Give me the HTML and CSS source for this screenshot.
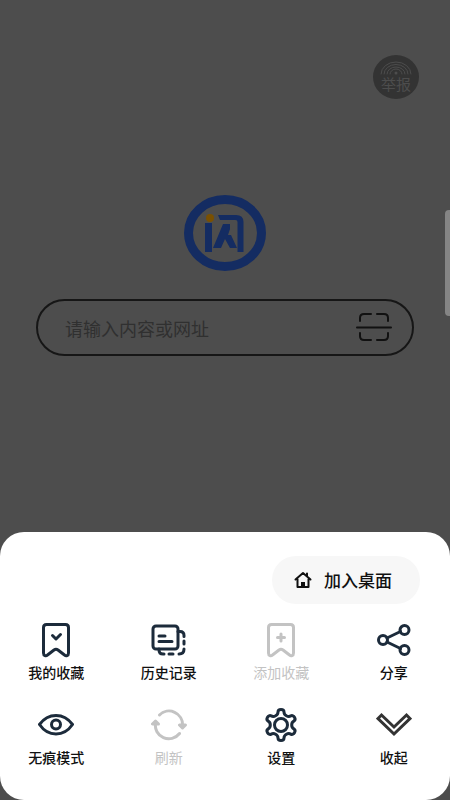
FILE: index.html
```html
<!DOCTYPE html>
<html lang="zh-CN">
<head>
<meta charset="utf-8">
<meta name="viewport" content="width=device-width, initial-scale=1">
<title>闪</title>
<link rel="stylesheet" href="styles.css">
</head>
<body>
<main class="home">
  <button class="report" type="button">
    <svg class="report-waves" viewBox="0 0 32 14" aria-hidden="true">
      <path d="M1 13a15 12 0 0 1 30 0M4 13a12 9.500 0 0 1 24 0M7 13a9 7 0 0 1 18 0M10 13a6 5 0 0 1 12 0"/>
      <circle cx="16" cy="12" r="1.500"/>
    </svg>
    <span>举报</span>
  </button>
  <svg class="logo" viewBox="0 0 82 76" aria-hidden="true">
    <ellipse class="logo-ring" cx="41" cy="38" rx="36.500" ry="33.500"/>
    <path class="logo-fill" d="M21 28h7v29h-7zM34 20h18q7.500 0 7.500 7v30h-6V27q0-2-2-2H36zM39 29h7v5l-2 6h3l6 13h-7l-5-9-4 9h-8z"/>
    <circle class="logo-dot" cx="26" cy="23" r="4"/>
  </svg>
  <form class="search">
    <input type="text" placeholder="请输入内容或网址" aria-label="请输入内容或网址">
    <button class="scan" type="button" aria-label="扫一扫">
      <svg viewBox="0 0 36 30" aria-hidden="true">
        <path d="M4 8V5q0-4 4-4h7M21 1h7q4 0 4 4v3M1 14.500h34M4 20v3q0 4 4 4h7M21 27h7q4 0 4-4v-3"/>
      </svg>
    </button>
  </form>
</main>
<div class="side-handle"></div>
<section class="sheet">
  <button class="add-desktop" type="button">
    <svg viewBox="0 0 18 18" aria-hidden="true">
      <path d="M1.500 8.500 9 2l7.500 6.500M3.500 8v8h11V8M13 2.500V5"/>
      <path class="door" d="M7 16v-5h4v5z"/>
    </svg>
    <span>加入桌面</span>
  </button>
  <nav class="menu">
    <button class="item" type="button">
      <svg viewBox="0 0 36 36" aria-hidden="true"><path d="M8.500 2.500h19q3 0 3 3v25.500c0 3-2.500 3.500-4 2L20 28q-2-1.500-4 0l-6.500 5c-1.500 1.500-4 1-4-2V5.500q0-3 3-3z"/><path d="m14.500 13.500 3.500 3.500 4.500-4.500"/></svg>
      <span>我的收藏</span>
    </button>
    <button class="item" type="button">
      <svg viewBox="0 0 36 36" aria-hidden="true"><rect x="2" y="4" width="25" height="23" rx="3"/><path d="M8 14h6M8 19.500h13M27 9.500h2q4 0 4 4v1M33 19v3M33 27q0 5-5 5M18 32h4M8 27v1q0 4 4 4h1"/></svg>
      <span>历史记录</span>
    </button>
    <button class="item" type="button" disabled>
      <svg viewBox="0 0 36 36" aria-hidden="true"><path d="M8.500 2.500h19q3 0 3 3v25.500c0 3-2.500 3.500-4 2L20 28q-2-1.500-4 0l-6.500 5c-1.500 1.500-4 1-4-2V5.500q0-3 3-3z"/><path d="M18 12v7M14.500 15.500h7"/></svg>
      <span>添加收藏</span>
    </button>
    <button class="item" type="button">
      <svg viewBox="0 0 36 36" aria-hidden="true"><circle cx="7" cy="18" r="4.500"/><circle cx="28.500" cy="8" r="4.500"/><circle cx="28.500" cy="28" r="4.500"/><path d="m11 16 13.500-6.500M11 20l13.500 6.500"/></svg>
      <span>分享</span>
    </button>
    <button class="item" type="button">
      <svg viewBox="0 0 36 36" aria-hidden="true"><path d="M1.500 17.500Q8 8.500 18 8.500T34.500 17.500Q28 27 18 27T1.500 17.500z"/><circle cx="18" cy="17.500" r="4.500"/></svg>
      <span>无痕模式</span>
    </button>
    <button class="item" type="button" disabled>
      <svg viewBox="0 0 36 36" aria-hidden="true"><path d="M8.500 8A13.500 13.500 0 0 1 31.500 18.500M28.500 18h6l-3 3zM28.500 26.500A13.500 13.500 0 0 1 4.500 16M1.500 17h6l-3-3z"/></svg>
      <span>刷新</span>
    </button>
    <button class="item" type="button">
      <svg viewBox="-18 -18 36 36" aria-hidden="true"><path d="M-3-13C-3-16.400 3-16.400 3-13C3-9.800 7-7.500 9.800-9.100C12.700-10.800 15.700-5.600 12.800-3.900C10-2.300 10 2.300 12.800 3.900C15.700 5.600 12.700 10.800 9.800 9.100C7 7.500 3 9.800 3 13C3 16.400-3 16.400-3 13C-3 9.800-7 7.500-9.800 9.100C-12.700 10.800-15.700 5.600-12.800 3.900C-10 2.300-10-2.300-12.800-3.900C-15.700-5.600-12.700-10.800-9.800-9.100C-7-7.500-3-9.800-3-13z"/><circle r="6.500"/></svg>
      <span>设置</span>
    </button>
    <button class="item" type="button">
      <svg class="collapse" viewBox="0 0 36 36" aria-hidden="true"><path d="M5.500 8 18 20 30.500 8l3.500 3.500L18 27 2 11.500z"/></svg>
      <span>收起</span>
    </button>
  </nav>
</section>
</body>
</html>
```
FILE: styles.css
```css
* {
  box-sizing: border-box;
}

body {
  margin: 0;
  min-height: 100vh;
  display: flex;
  flex-direction: column;
  background: #4d4d4d;
  font-family: "Noto Sans CJK SC", sans-serif;
}

button {
  border: 0;
  padding: 0;
  background: none;
  font: inherit;
  color: inherit;
}

svg {
  display: block;
  fill: none;
  stroke: currentColor;
  stroke-linecap: round;
  stroke-linejoin: round;
}

.home {
  display: flex;
  flex-direction: column;
  align-items: center;
  padding: 55px 36px 32px;
}

.report {
  align-self: flex-end;
  display: flex;
  flex-direction: column;
  align-items: center;
  width: 46px;
  height: 44px;
  margin-right: -5px;
  padding-top: 6px;
  border-radius: 50%;
  background: #333;
  color: #4d4d4d;
  font-size: 15px;
  line-height: 18px;
}

.report-waves {
  width: 32px;
  height: 14px;
}

.report-waves circle {
  fill: currentColor;
  stroke: none;
}

.logo {
  width: 82px;
  height: 76px;
  margin: 96px 0 28px;
}

.logo-ring {
  stroke: #142c62;
  stroke-width: 9;
}

.logo-fill {
  fill: #142c62;
  stroke: none;
}

.logo-dot {
  fill: #7a5000;
  stroke: none;
}

.search {
  display: flex;
  align-items: center;
  width: 100%;
  height: 57px;
  padding: 0 20px 0 27px;
  border: 2px solid #161616;
  border-radius: 29px;
}

.search input {
  flex: 1;
  min-width: 0;
  border: 0;
  padding: 0;
  outline: 0;
  background: none;
  color: #161616;
  font: inherit;
  font-size: 18px;
}

.search input::placeholder {
  color: #303030;
  opacity: 1;
}

.scan {
  color: #111;
}

.scan svg {
  width: 36px;
  height: 30px;
  stroke-width: 2;
}

.side-handle {
  position: fixed;
  top: 210px;
  right: 0;
  width: 5px;
  height: 106px;
  border-radius: 4px 0 0 4px;
  background: #858585;
}

.sheet {
  display: flex;
  flex-direction: column;
  gap: 18px;
  margin-top: auto;
  padding: 24px 0 33px;
  border-radius: 24px;
  background: #fff;
  color: #111;
}

.add-desktop {
  align-self: flex-end;
  display: flex;
  align-items: center;
  gap: 12px;
  height: 48px;
  margin-right: 30px;
  padding: 0 28px 0 22px;
  border-radius: 24px;
  background: #f7f7f7;
  font-size: 17px;
  line-height: 24px;
  font-weight: 500;
}

.add-desktop svg {
  width: 18px;
  height: 18px;
  stroke-width: 2;
}

.add-desktop .door {
  fill: currentColor;
  stroke: none;
}

.menu {
  display: grid;
  grid-template-columns: repeat(4, 1fr);
  row-gap: 25px;
}

.item {
  display: flex;
  flex-direction: column;
  align-items: center;
  gap: 4px;
  font-size: 14px;
  line-height: 20px;
  font-weight: 500;
}

.item svg {
  width: 36px;
  height: 36px;
  color: #1c2b3b;
  stroke-width: 3;
}

.item .collapse {
  color: #333;
  stroke-width: 3;
  stroke-linejoin: miter;
}

.item:disabled,
.item:disabled svg {
  color: #c3c3c3;
  font-weight: 400;
}
```
